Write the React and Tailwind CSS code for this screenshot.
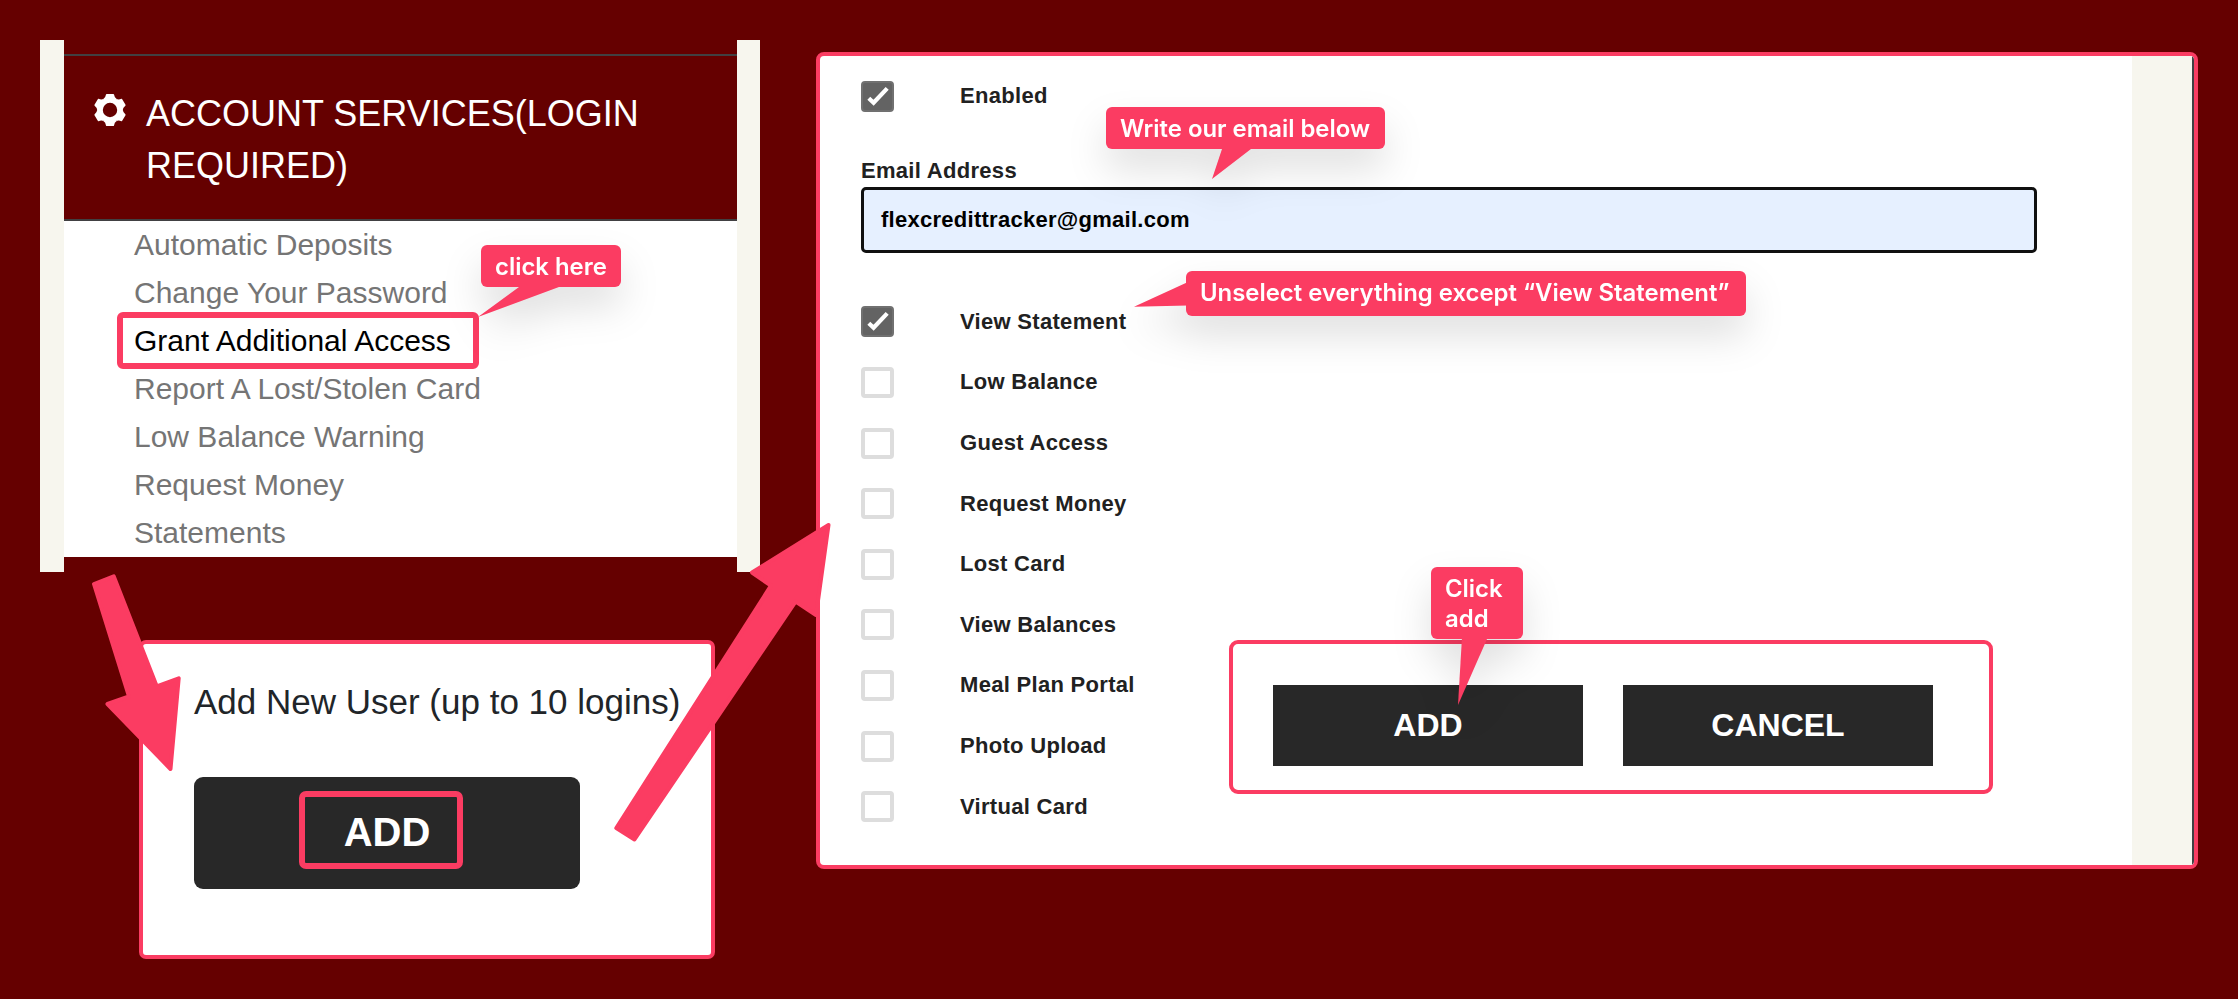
const links = [
  "Automatic Deposits",
  "Change Your Password",
  "Grant Additional Access",
  "Report A Lost/Stolen Card",
  "Low Balance Warning",
  "Request Money",
  "Statements",
];

const permissions = [
  "View Statement",
  "Low Balance",
  "Guest Access",
  "Request Money",
  "Lost Card",
  "View Balances",
  "Meal Plan Portal",
  "Photo Upload",
  "Virtual Card",
];

function GearIcon({ className }) {
  return (
    <svg className={className} viewBox="-16 -16 32 32" fill="currentColor">
      <circle r="9.8" fill="none" stroke="currentColor" strokeWidth="5.2" />
      {[0, 60, 120, 180, 240, 300].map((a) => (
        <path key={a} transform={`rotate(${a})`} d="M-3.3-16H3.3Q3.9-16 4-15.4Q4.4-12.4 6.6-11L0-8L-6.6-11Q-4.4-12.4-4-15.4Q-3.9-16-3.3-16Z" />
      ))}
    </svg>
  );
}

function Option({ label, checked }) {
  return (
    <label className="flex h-[60.6px] items-center">
      {checked ? (
        <span className="rounded-[4px] border-2 border-[#707070] bg-[#636363] text-white">
          <svg width="29" height="27" viewBox="2 2 29 27" fill="none" stroke="currentColor" strokeWidth="4.2">
            <path d="M7.8 17.2L12.6 21.8L26.2 7.4" />
          </svg>
        </span>
      ) : (
        <span className="h-[31px] w-[33px] rounded-[4px] border-4 border-[#dddddd] bg-white" />
      )}
      <span className="ml-[66px] text-[22px] leading-[30px] font-bold tracking-[0.3px] text-[#212121]">{label}</span>
    </label>
  );
}

function Callout({ place, text, tail, size }) {
  return (
    <div className={`absolute drop-shadow-[0_20px_19px_rgba(0,0,0,0.12)] ${place}`}>
      <svg className="absolute top-0 left-0 overflow-visible" width="1" height="1" fill="#fb3c62">
        <polygon points={tail} />
      </svg>
      <div className={`relative flex items-center rounded-[6px] bg-[#fb3c62] pl-[14px] font-['Inter',sans-serif] text-[23.9px] font-semibold whitespace-nowrap text-white ${size}`}>
        {text}
      </div>
    </div>
  );
}

function ServicesMenu() {
  return (
    <section className="mt-[40px] ml-[40px] flex h-[532px] w-[720px] flex-col border-r-[23px] border-l-[24px] border-[#f7f6ee] bg-[#650000]">
      <header className="mt-[14px] flex h-[167px] border-y-2 border-[#414042] pt-[32px] pl-[30px] text-white">
        <GearIcon className="mt-[6px] size-[32px] shrink-0" />
        <h1 className="ml-[20px] w-[520px] text-[36px] leading-[52px]">ACCOUNT SERVICES(LOGIN REQUIRED)</h1>
      </header>
      <ul className="h-[336px] bg-white pl-[70px] text-[30px] leading-[48px] text-[#757575]">
        {links.map((l) => (
          <li key={l} className={l === "Grant Additional Access" ? "text-black" : ""}>{l}</li>
        ))}
      </ul>
    </section>
  );
}

function NewUserCard() {
  return (
    <section className="mt-[68px] ml-[139px] flex h-[319px] w-[576px] flex-col items-start rounded-[7px] border-4 border-[#fb3c62] bg-white pl-[51px]">
      <h2 className="mt-[36px] text-[35px] leading-[44px] whitespace-nowrap text-[#212529]">Add New User (up to 10 logins)</h2>
      <button className="mt-[53px] flex h-[112px] w-[386px] items-center justify-center rounded-[9px] bg-[#282828] pb-[3px] text-[40px] font-bold text-white">
        ADD
      </button>
    </section>
  );
}

function AccessForm() {
  return (
    <section className="mt-[52px] ml-[56px] flex h-[817px] w-[1382px] overflow-hidden rounded-[8px] border-4 border-[#fb3c62] bg-white">
      <form className="w-[1312px] pl-[41px]">
        <div className="pt-[10px]">
          <Option label="Enabled" checked />
        </div>
        <div className="mt-[28px] text-[22px] leading-[32px] font-bold tracking-[0.3px] text-[#212121]">Email Address</div>
        <div className="flex h-[66px] w-[1176px] items-center rounded-[5px] border-[3px] border-[#101010] bg-[#e6f0ff] pl-[17px] text-[22px] font-bold tracking-[0.27px] text-black">
          flexcredittracker@gmail.com
        </div>
        <div className="mt-[39px] flex">
          <div className="w-[368px] shrink-0">
            {permissions.map((p, i) => (
              <Option key={p} label={p} checked={i === 0} />
            ))}
          </div>
          <div className="mt-[348px] flex h-[154px] w-[764px] shrink-0 gap-[40px] rounded-[9px] border-4 border-[#fb3c62] pt-[41px] pl-[40px] text-[32px] font-bold text-white">
            <button type="button" className="h-[81px] w-[310px] bg-[#282828]">ADD</button>
            <button type="button" className="h-[81px] w-[310px] bg-[#282828]">CANCEL</button>
          </div>
        </div>
      </form>
      <div className="flex-1 border-r-2 border-[#414042] bg-[#f7f6ee]" />
    </section>
  );
}

export default function App() {
  return (
    <main className="relative flex h-[999px] w-[2238px] items-start overflow-hidden bg-[#650000] font-['Liberation_Sans',Arial,sans-serif]">
      <div className="flex w-[760px] shrink-0 flex-col">
        <ServicesMenu />
        <NewUserCard />
      </div>
      <AccessForm />

      <div className="absolute top-[312px] left-[117px] h-[57px] w-[362px] rounded-[6px] border-6 border-[#fb3c62]" />
      <div className="absolute top-[791px] left-[299px] h-[78px] w-[164px] rounded-[7px] border-6 border-[#fb3c62]" />

      <svg className="absolute top-0 left-0" width="2238" height="999" fill="#fb3c62" stroke="#fb3c62" strokeWidth="4" strokeLinejoin="round">
        <polygon points="94,584 113.7,576.3 156.8,686.4 178.7,678.3 170.5,769 107.5,704 129,696.5" />
        <polygon points="616.3,828 634.5,839.5 795.7,601.5 816,615 828.5,525 752,572.5 771,585.7" />
      </svg>

      <Callout place="top-[245px] left-[481px]" size="h-[42px] w-[140px] pt-[2px]" tail="38,40 78,40 78,42 -3,72 38,42" text="click here" />
      <Callout place="top-[107px] left-[1106px]" size="h-[42px] w-[279px] pt-[2px]" tail="116,40 145,40 145,42 106,72 116,42" text="Write our email below" />
      <Callout place="top-[271px] left-[1186px]" size="h-[45px] w-[560px] pb-px" tail="2,11 2,34.5 -52,35.7" text="Unselect everything except “View Statement”" />
      <Callout place="top-[567px] left-[1431px]" size="h-[72px] w-[92px] pt-px leading-[30px]" tail="31,70 56,70 56,72 27,138" text={<span>Click<br />add</span>} />
    </main>
  );
}
